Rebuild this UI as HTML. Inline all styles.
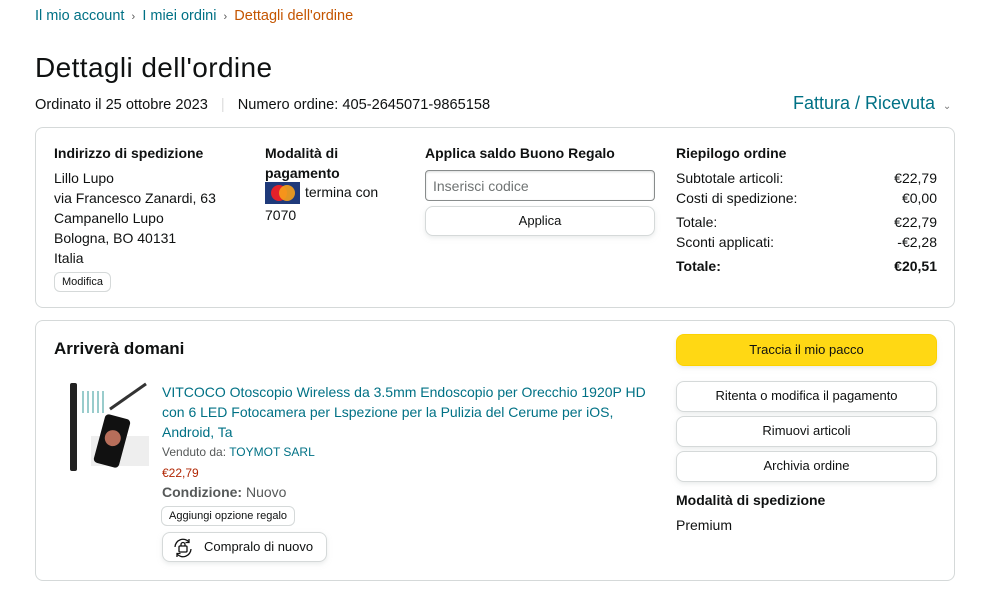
<!DOCTYPE html>
<html><head><meta charset="utf-8"><style>
*{box-sizing:border-box;margin:0;padding:0}
body{width:993px;height:608px;background:#fff;font-family:"Liberation Sans","DejaVu Sans",sans-serif;color:#0f1111;position:relative;overflow:hidden;font-size:14px}
.a{position:absolute;white-space:nowrap}
.b{font-weight:bold}
.box{position:absolute;border:1px solid #d5d9d9;border-radius:8px}
.btn{position:absolute;border:1px solid #d5d9d9;border-radius:8px;background:#fff;box-shadow:0 2px 5px rgba(213,217,217,.5);text-align:center;font-size:13px;line-height:28px}
.link{color:#007185}
.r{position:absolute;right:18px;text-align:right}
</style></head><body>
<div class="a" style="left:35px;top:7px;font-size:14.5px;line-height:18px"><span class="link">Il mio account</span> <span style="color:#555;font-size:11px">&nbsp;›&nbsp;</span> <span class="link">I miei ordini</span> <span style="color:#555;font-size:11px">&nbsp;›&nbsp;</span> <span style="color:#c45500">Dettagli dell'ordine</span></div>
<div class="a" style="left:35px;top:52px;font-size:28px;line-height:32px;letter-spacing:0.4px">Dettagli dell'ordine</div>
<div class="a" style="left:35px;top:96px;line-height:18px;font-size:14.6px">Ordinato il 25 ottobre 2023 <span style="color:#ddd;margin:0 9px">|</span> Numero ordine: 405-2645071-9865158</div>
<div class="a link" style="left:793px;top:92px;font-size:18px;line-height:22px">Fattura / Ricevuta <span style="font-size:10px;color:#777">&nbsp;⌄</span></div>

<div class="box" style="left:35px;top:127px;width:920px;height:181px">
<div class="a b" style="left:18px;top:17px">Indirizzo di spedizione</div>
<div class="a" style="left:18px;top:40px;line-height:20px">Lillo Lupo<br>via Francesco Zanardi, 63<br>Campanello Lupo<br>Bologna, BO 40131<br>Italia</div>
<div class="a" style="left:18px;top:144px;border:1px solid #d5d9d9;border-radius:6px;font-size:11px;padding:3px 7px">Modifica</div>
<div class="a b" style="left:229px;top:15px;line-height:20px">Modalità di<br>pagamento</div>
<div class="a" style="left:229px;top:54px;width:35px;height:22px;background:#1f3a7a"><div style="position:absolute;left:6px;top:3px;width:16px;height:16px;border-radius:50%;background:#e5212a"></div><div style="position:absolute;left:14px;top:3px;width:16px;height:16px;border-radius:50%;background:#f7a11a;opacity:.9"></div></div>
<div class="a" style="left:269px;top:56px">termina con</div>
<div class="a" style="left:229px;top:79px">7070</div>
<div class="a b" style="left:389px;top:17px">Applica saldo Buono Regalo</div>
<div class="a" style="left:389px;top:42px;width:230px;height:31px;border:1px solid #888c8c;border-radius:4px;color:#6f7373;padding:7px 7px;box-shadow:inset 0 1px 2px rgba(15,17,17,.15)">Inserisci codice</div>
<div class="btn" style="left:389px;top:78px;width:230px;height:30px">Applica</div>
<div class="a b" style="left:640px;top:17px">Riepilogo ordine</div>
<div class="a" style="left:640px;top:40px;width:261px;line-height:20px">
<div style="position:relative;height:20px">Subtotale articoli:<span class="r" style="right:0">€22,79</span></div>
<div style="position:relative;height:24px">Costi di spedizione:<span class="r" style="right:0">€0,00</span></div>
<div style="position:relative;height:20px">Totale:<span class="r" style="right:0">€22,79</span></div>
<div style="position:relative;height:24px">Sconti applicati:<span class="r" style="right:0">-€2,28</span></div>
<div style="position:relative;height:20px" class="b">Totale:<span class="r" style="right:0">€20,51</span></div>
</div>
</div>

<div class="box" style="left:35px;top:320px;width:920px;height:261px">
<div class="a b" style="left:18px;top:17px;font-size:17px;line-height:22px">Arriverà domani</div>
<div class="a" style="left:30px;top:60px;width:85px;height:90px">
<div style="position:absolute;left:4px;top:2px;width:7px;height:88px;background:#222;border-radius:2px"></div>
<div style="position:absolute;left:16px;top:10px;width:22px;height:22px;background:repeating-linear-gradient(90deg,#9cc 0 2px,#fff 2px 5px)"></div>
<div style="position:absolute;left:40px;top:14px;width:44px;height:3px;background:#333;transform:rotate(-35deg)"></div>
<div style="position:absolute;left:25px;top:55px;width:58px;height:30px;background:#eee"></div>
<div style="position:absolute;left:33px;top:35px;width:26px;height:50px;background:#111;border-radius:4px;transform:rotate(15deg)"><div style="margin:14px 5px;width:16px;height:16px;border-radius:50%;background:#b76e5a"></div></div>
</div>
<div class="a link" style="left:126px;top:61px;font-size:14px;line-height:20px;white-space:normal;width:490px">VITCOCO Otoscopio Wireless da 3.5mm Endoscopio per Orecchio 1920P HD con 6 LED Fotocamera per Lspezione per la Pulizia del Cerume per iOS, Android, Ta</div>
<div class="a" style="left:126px;top:124px;font-size:12px;color:#565959">Venduto da: <span class="link">TOYMOT SARL</span></div>
<div class="a" style="left:126px;top:145px;font-size:12px;color:#b12704">€22,79</div>
<div class="a" style="left:126px;top:163px;color:#565959"><b>Condizione:</b> Nuovo</div>
<div class="a" style="left:125px;top:185px;border:1px solid #d5d9d9;border-radius:6px;font-size:11px;padding:3px 7px">Aggiungi opzione regalo</div>
<div class="btn" style="left:126px;top:211px;width:165px;height:30px;text-align:left;padding-left:41px;font-size:13px">
<svg style="position:absolute;left:9px;top:5px" width="22" height="20" viewBox="0 0 22 20" fill="none" stroke="#111" stroke-width="1.3"><path d="M3 9a8 8 0 0 1 14-5M19 11a8 8 0 0 1-14 5"/><path d="M17 1v3.5h-3.5M5 19v-3.5h3.5"/><rect x="7" y="8" width="8" height="6" rx="1"/><path d="M9 8V6.5a2 2 0 0 1 4 0V8"/></svg>Compralo di nuovo</div>
<div class="btn" style="left:640px;top:13px;width:261px;height:32px;background:#ffd814;border-color:#fcd200;line-height:30px">Traccia il mio pacco</div>
<div class="btn" style="left:640px;top:60px;width:261px;height:31px">Ritenta o modifica il pagamento</div>
<div class="btn" style="left:640px;top:95px;width:261px;height:31px">Rimuovi articoli</div>
<div class="btn" style="left:640px;top:130px;width:261px;height:31px">Archivia ordine</div>
<div class="a b" style="left:640px;top:171px">Modalità di spedizione</div>
<div class="a" style="left:640px;top:196px">Premium</div>
</div>
</body></html>
